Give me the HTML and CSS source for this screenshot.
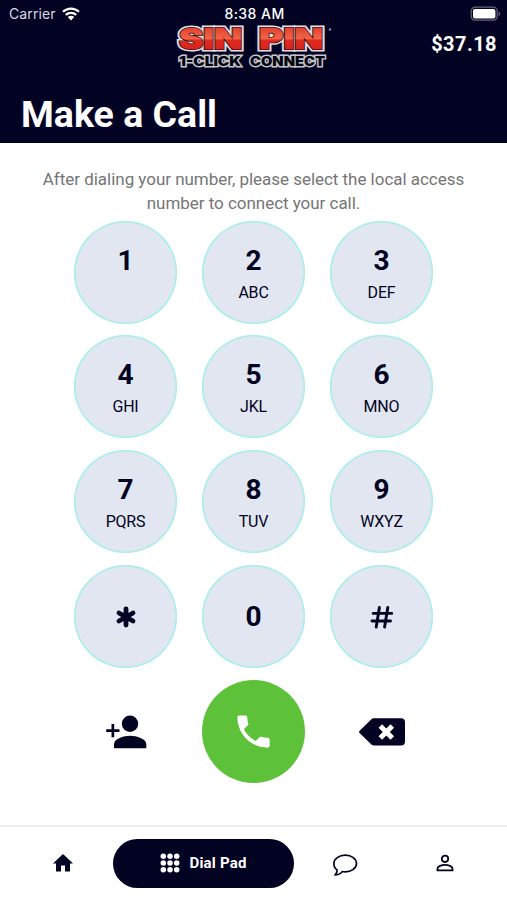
FILE: index.html
```html
<!DOCTYPE html>
<html lang="en">
<head>
    <meta charset="UTF-8">
    <meta name="viewport" content="width=device-width, initial-scale=1.0">
    <title>Make a Call</title>
    <link rel="stylesheet" href="styles.css">
</head>
<body>
    <header class="header">
        <div class="status-bar">
            <div class="carrier">
                <span>Carrier</span>
                <svg class="wifi" viewBox="0 0 18 14">
                    <path d="M1 4.8a11.500 11.500 0 0 1 16 0M3.800 7.900a7.500 7.500 0 0 1 10.400 0" fill="none" stroke="#fff" stroke-width="2.200"/>
                    <path d="M5.800 10.100a4.600 4.600 0 0 1 6.400 0L9 13.400z" fill="#fff"/>
                </svg>
            </div>
            <span class="time">8:38 AM</span>
            <svg class="battery" viewBox="0 0 32 16">
                <rect x="1.200" y="1.200" width="26" height="13" rx="4" fill="none" stroke="#66667e" stroke-width="1.200"/>
                <rect x="3" y="3" width="22.400" height="9.400" rx="2" fill="#fff"/>
                <path d="M28.600 5.400q3.600 2.300 0 4.600z" fill="#66667e"/>
            </svg>
        </div>
        <div class="brand-row">
            <svg class="logo" viewBox="0 0 160 46">
                <defs>
                    <linearGradient id="red" gradientUnits="userSpaceOnUse" x1="0" y1="3" x2="0" y2="25">
                        <stop offset="0" stop-color="#e0442f"/>
                        <stop offset=".48" stop-color="#f26547"/>
                        <stop offset=".56" stop-color="#e02a1e"/>
                        <stop offset="1" stop-color="#d8241c"/>
                    </linearGradient>
                    <g id="name">
                        <text x="6" y="24" textLength="63" lengthAdjust="spacingAndGlyphs">SIN</text>
                        <text x="86" y="24" textLength="64" lengthAdjust="spacingAndGlyphs">PIN</text>
                    </g>
                </defs>
                <use href="#name" class="logo-name outline"/>
                <use href="#name" class="logo-name shade"/>
                <use href="#name" class="logo-name"/>
                <text class="logo-tag" x="6" y="41.300" textLength="62" lengthAdjust="spacingAndGlyphs">1-CLICK</text>
                <text class="logo-tag" x="77" y="41.300" textLength="75" lengthAdjust="spacingAndGlyphs">CONNECT</text>
                <circle cx="157" cy="4.500" r="1.200" fill="#8c8ca0"/>
            </svg>
            <span class="balance">$37.18</span>
        </div>
        <h1 class="title">Make a Call</h1>
    </header>

    <main class="dialer">
        <p class="hint">After dialing your number, please select the local access<br>number to connect your call.</p>
        <div class="keypad">
            <button class="key"><b>1</b><span></span></button>
            <button class="key"><b>2</b><span>ABC</span></button>
            <button class="key"><b>3</b><span>DEF</span></button>
            <button class="key"><b>4</b><span>GHI</span></button>
            <button class="key"><b>5</b><span>JKL</span></button>
            <button class="key"><b>6</b><span>MNO</span></button>
            <button class="key"><b>7</b><span>PQRS</span></button>
            <button class="key"><b>8</b><span>TUV</span></button>
            <button class="key"><b>9</b><span>WXYZ</span></button>
            <button class="key single" aria-label="star">
                <svg class="symbol" viewBox="0 0 24 24">
                    <path d="M12 4v16M5 8l14 8M19 8L5 16" stroke="#020223" stroke-width="4.800" stroke-linecap="round"/>
                </svg>
            </button>
            <button class="key single"><b>0</b></button>
            <button class="key single" aria-label="pound">
                <svg class="symbol" viewBox="0 0 24 24">
                    <path d="M9.400 2.500L6.200 22M17.800 2.500L14.600 22M3.200 8.400h18.500M2 16h18.500" stroke="#020223" stroke-width="2.900" stroke-linecap="round"/>
                </svg>
            </button>
            <button class="action" aria-label="Add contact">
                <svg class="add-icon" viewBox="0 0 42 34">
                    <circle cx="25" cy="8.800" r="8.200"/>
                    <path d="M9 33.200v-4c0-5.300 9.500-8.400 16-8.400s16.300 3.100 16.300 8.400v4z"/>
                    <path d="M6.500 8.900h2.700v5.300h5.300v2.700H9.200v5.300H6.500v-5.300H1.200v-2.700h5.300z"/>
                </svg>
            </button>
            <button class="action call" aria-label="Call">
                <svg class="call-icon" viewBox="0 0 24 24">
                    <path d="M20 15.500c-1.250 0-2.450-.2-3.570-.57-.35-.11-.74-.03-1.020.24l-2.200 2.200c-2.830-1.440-5.150-3.750-6.590-6.590l2.200-2.210c.28-.26.360-.65.250-1C8.700 6.450 8.500 5.250 8.500 4c0-.55-.45-1-1-1H4c-.55 0-1 .45-1 1 0 9.390 7.610 17 17 17 .55 0 1-.45 1-1v-3.500c0-.55-.45-1-1-1z"/>
                </svg>
            </button>
            <button class="action" aria-label="Delete">
                <svg class="delete-icon" viewBox="0 0 48 30">
                    <path d="M1.600 13.700L13.400 2.200Q14.400 1.200 15.900 1.200H43q4 0 4 4V24.600q0 4-4 4H15.900q-1.500 0-2.500-1L1.600 16.100q-1.200-1.200 0-2.400z"/>
                    <path d="M22.300 8.900L34.300 20.900M34.300 8.900L22.300 20.900" stroke="#fff" stroke-width="5"/>
                </svg>
            </button>
        </div>
    </main>

    <nav class="tabs">
        <a class="tab home">
            <svg viewBox="0 0 24 24"><path d="M10 20.500v-6h4v6h5v-8h3L12 3 2 12.500h3v8z"/></svg>
        </a>
        <a class="tab active">
            <svg viewBox="0 0 20 20">
                <circle cx="3.300" cy="3.300" r="2.750"/><circle cx="10" cy="3.300" r="2.750"/><circle cx="16.700" cy="3.300" r="2.750"/>
                <circle cx="3.300" cy="10" r="2.750"/><circle cx="10" cy="10" r="2.750"/><circle cx="16.700" cy="10" r="2.750"/>
                <circle cx="3.300" cy="16.700" r="2.750"/><circle cx="10" cy="16.700" r="2.750"/><circle cx="16.700" cy="16.700" r="2.750"/>
            </svg>
            <span>Dial Pad</span>
        </a>
        <a class="tab chat">
            <svg viewBox="0 0 26 24">
                <path d="M13.300 2.200c6.300 0 11.200 3.600 11.200 8.300s-5 8.300-11.200 8.300c-1 0-2-.1-2.900-.3-1.900 2.200-4.300 3.500-7.400 3.500 1.500-1.500 2.400-3.200 2.100-5C2.900 15.500 1.900 13.200 1.900 10.500 1.900 5.800 7 2.200 13.300 2.200z" fill="none" stroke="#020223" stroke-width="1.700" stroke-linejoin="round"/>
            </svg>
        </a>
        <a class="tab profile">
            <svg viewBox="0 0 20 20">
                <circle cx="10" cy="5.800" r="3.200" fill="none" stroke="#020223" stroke-width="1.800"/>
                <path d="M2.500 17.300v-1.700c0-2.300 4.200-3.700 7.500-3.700s7.500 1.400 7.500 3.700v1.700z" fill="none" stroke="#020223" stroke-width="1.800"/>
            </svg>
        </a>
    </nav>
</body>
</html>
```
FILE: styles.css
```css
* {
    box-sizing: border-box;
}
body {
    margin: 0;
    height: 900px;
    display: flex;
    flex-direction: column;
    overflow: hidden;
    background-color: #fff;
    color: #020223;
    font-family: Roboto, sans-serif;
}
svg {
    display: block;
    fill: #020223;
}
button {
    padding: 0;
    border: none;
    background: none;
    color: inherit;
    font-family: inherit;
    cursor: pointer;
}

/* header */
.header {
    height: 142.5px;
    flex-shrink: 0;
    background-color: #020223;
    color: #fff;
}
.status-bar {
    height: 25px;
    padding: 2px 5px 0 9px;
    display: grid;
    grid-template-columns: 1fr auto 1fr;
    align-items: center;
    font-family: Inter, sans-serif;
    font-size: 14px;
}
.carrier {
    display: flex;
    align-items: center;
    gap: 6px;
    color: #d8d8e2;
    letter-spacing: 0.1px;
}
.wifi {
    width: 18px;
    height: 14px;
}
.time {
    padding-right: 2px;
    font-weight: 500;
    letter-spacing: 0.45px;
}
.battery {
    width: 32px;
    height: 16px;
    justify-self: end;
}
.brand-row {
    height: 45px;
    padding: 0 10px 0 173px;
    display: flex;
    justify-content: space-between;
}
.logo {
    width: 160px;
    height: 46px;
    font-family: Inter, "Liberation Sans", sans-serif;
    font-weight: 900;
}
.logo-name {
    font-size: 28px;
    fill: url(#red);
    stroke: url(#red);
    stroke-width: 0.6px;
}
.logo-name.outline {
    stroke: #dedee4;
    stroke-width: 5px;
}
.logo-name.shade {
    stroke: #3a0c12;
    stroke-width: 2px;
}
.logo-tag {
    font-size: 13.5px;
    fill: #05050f;
    stroke: #c4c5cc;
    stroke-width: 2.8px;
    paint-order: stroke;
}
.balance {
    padding-top: 7px;
    font-size: 20px;
    line-height: 24px;
    font-weight: 700;
    letter-spacing: 0.45px;
}
.title {
    margin: 0;
    padding-left: 21px;
    font-size: 37.5px;
    line-height: 89px;
    height: 72px;
}

/* dialer */
.dialer {
    flex: 1;
    padding-top: 24px;
}
.hint {
    margin: 0 0 6px;
    color: #757575;
    font-size: 17px;
    line-height: 24px;
    letter-spacing: -0.03px;
    text-align: center;
}
.keypad {
    display: grid;
    grid-template-columns: repeat(3, 103px);
    grid-auto-rows: 103px;
    gap: 11.9px 25px;
    justify-content: center;
}
.key {
    display: flex;
    flex-direction: column;
    align-items: center;
    padding-top: 22px;
    border-radius: 50%;
    background-color: #e1e6f0;
    box-shadow: inset 0 0 0 1.5px #a5f0ea;
}
.key b {
    font-size: 28px;
    line-height: 36px;
}
.key span {
    margin-top: 4px;
    font-size: 16px;
    line-height: 20px;
    letter-spacing: -0.2px;
}
.key.single {
    justify-content: center;
    padding-top: 0;
}
.symbol {
    width: 24px;
    height: 24px;
    fill: none;
}
.action {
    display: flex;
    align-items: center;
    justify-content: center;
    border-radius: 50%;
}
.call {
    background-color: #5dc239;
}
.add-icon {
    width: 42px;
    height: 34px;
}
.call-icon {
    width: 43px;
    height: 43px;
    fill: #fff;
}
.delete-icon {
    width: 48px;
    height: 30px;
}

/* bottom tabs */
.tabs {
    height: 75px;
    flex-shrink: 0;
    display: grid;
    grid-template-columns: 113px 181px 101px 100px;
    align-items: center;
    padding-bottom: 1px;
    border-top: 2px solid #ececec;
}
.tab {
    display: flex;
    align-items: center;
    justify-content: center;
}
.home {
    padding-left: 13px;
}
.home svg {
    width: 24px;
    height: 24px;
}
.active {
    height: 49px;
    gap: 9px;
    border-radius: 25px;
    background-color: #020223;
    color: #fff;
    font-size: 15px;
    font-weight: 700;
    letter-spacing: 0.2px;
}
.active svg {
    width: 20px;
    height: 20px;
    fill: #fff;
}
.chat svg {
    width: 26px;
    height: 24px;
}
.chat {
    padding-top: 3px;
}
.profile svg {
    width: 20px;
    height: 20px;
}
```
